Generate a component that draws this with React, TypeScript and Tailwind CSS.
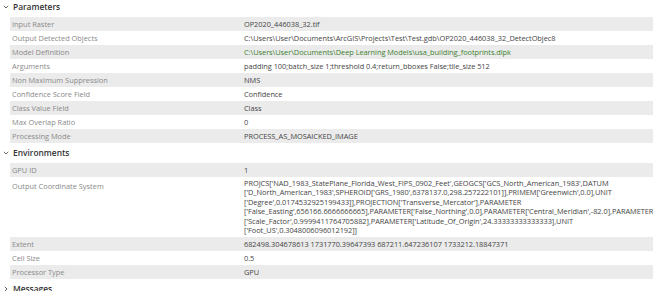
import React from 'react'

type Row = { label: string; value: string[]; link?: boolean }

const parameters: Row[] = [
  { label: 'Input Raster', value: ['OP2020_446038_32.tif'] },
  {
    label: 'Output Detected Objects',
    value: ['C:\\Users\\User\\Documents\\ArcGIS\\Projects\\Test\\Test.gdb\\OP2020_446038_32_DetectObjec8'],
  },
  {
    label: 'Model Definition',
    value: ['C:\\Users\\User\\Documents\\Deep Learning Models\\usa_building_footprints.dlpk'],
    link: true,
  },
  {
    label: 'Arguments',
    value: ['padding 100;batch_size 1;threshold 0.4;return_bboxes False;tile_size 512'],
  },
  { label: 'Non Maximum Suppression', value: ['NMS'] },
  { label: 'Confidence Score Field', value: ['Confidence'] },
  { label: 'Class Value Field', value: ['Class'] },
  { label: 'Max Overlap Ratio', value: ['0'] },
  { label: 'Processing Mode', value: ['PROCESS_AS_MOSAICKED_IMAGE'] },
]

const environments: Row[] = [
  { label: 'GPU ID', value: ['1'] },
  {
    label: 'Output Coordinate System',
    value: [
      "PROJCS['NAD_1983_StatePlane_Florida_West_FIPS_0902_Feet',GEOGCS['GCS_North_American_1983',DATUM",
      "['D_North_American_1983',SPHEROID['GRS_1980',6378137.0,298.257222101]],PRIMEM['Greenwich',0.0],UNIT",
      "['Degree',0.0174532925199433]],PROJECTION['Transverse_Mercator'],PARAMETER",
      "['False_Easting',656166.6666666665],PARAMETER['False_Northing',0.0],PARAMETER['Central_Meridian',-82.0],PARAMETER",
      "['Scale_Factor',0.9999411764705882],PARAMETER['Latitude_Of_Origin',24.33333333333333],UNIT",
      "['Foot_US',0.3048006096012192]]",
    ],
  },
  {
    label: 'Extent',
    value: ['682498.304678613 1731770.39647393 687211.647236107 1733212.18847371'],
  },
  { label: 'Cell Size', value: ['0.5'] },
  { label: 'Processor Type', value: ['GPU'] },
]

function Chevron({ open }: { open: boolean }) {
  return (
    <svg width="6" height="6" viewBox="0 0 6 6" className="mr-[4px] ml-[3px]">
      {open ? (
        <path d="M0.8 1.8 L3 4 L5.2 1.8" fill="none" stroke="#555" strokeWidth="0.9" />
      ) : (
        <path d="M1.8 0.8 L4 3 L1.8 5.2" fill="none" stroke="#555" strokeWidth="0.9" />
      )}
    </svg>
  )
}

function Section({ title, rows, open = true }: { title: string; rows: Row[]; open?: boolean }) {
  return (
    <div>
      <div className="flex h-[14px] items-center text-[8.4px] font-semibold text-[#333]">
        <Chevron open={open} />
        {title}
      </div>
      {open && (
        <div className="mt-[3px] ml-[10px]">
          {rows.map((row, i) => (
            <div
              key={row.label}
              className={`flex ${i % 2 === 0 ? 'bg-[#ebebeb]' : 'bg-white'} ${
                row.value.length > 1 ? 'items-start py-[2px]' : 'h-[14px] items-center'
              }`}
            >
              <div className="w-[231px] shrink-0 pl-[2px] text-[#8a8a8a]">{row.label}</div>
              <div
                className={`whitespace-nowrap pl-[3px] tracking-[-0.04px] ${
                  row.link ? 'text-[#3b7f2f]' : 'text-[#454545]'
                }`}
              >
                {row.value.map((line) => (
                  <div key={line} className={row.value.length > 1 ? 'leading-[9.4px]' : ''}>
                    {line}
                  </div>
                ))}
              </div>
            </div>
          ))}
        </div>
      )}
    </div>
  )
}

export default function App() {
  return (
    <div
      className="h-[291px] w-[653px] overflow-hidden bg-white text-[7.4px] leading-[14px]"
      style={{ fontFamily: '"Open Sans", "Noto Sans", sans-serif' }}
    >
      <Section title="Parameters" rows={parameters} />
      <div className="mt-[3px]">
        <Section title="Environments" rows={environments} />
      </div>
      <div className="mt-[3px]">
        <Section title="Messages" rows={[]} open={false} />
      </div>
    </div>
  )
}
